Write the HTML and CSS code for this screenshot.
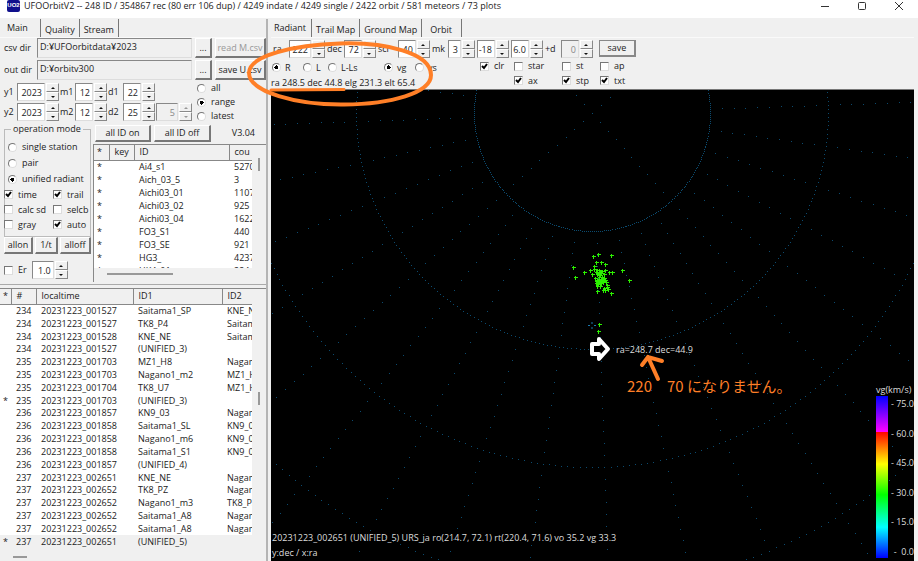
FILE: index.html
```html
<!DOCTYPE html>
<html lang="en">
<head>
    <meta charset="UTF-8">
    <title>UFOOrbitV2</title>
    <link rel="stylesheet" href="styles.css">
</head>
<body>
<header class="titlebar">
    <span class="logo">UO2</span>
    <h1>UFOOrbitV2 -- 248 ID / 354867 rec (80 err 106 dup) / 4249 indate / 4249 single / 2422 orbit / 581 meteors / 73 plots</h1>
    <div class="win-buttons">
        <button aria-label="Minimize"><svg width="10" height="10"><path d="M1 5.500h8"/></svg></button>
        <button aria-label="Maximize"><svg width="10" height="10"><rect x="1.500" y="1.500" width="7" height="7" rx="1"/></svg></button>
        <button aria-label="Close"><svg width="10" height="10"><path d="M1 1l8 8M9 1l-8 8"/></svg></button>
    </div>
</header>
<div class="window">
    <div class="left">
        <nav class="tabs">
            <button class="tab active">Main</button>
            <button class="tab">Quality</button>
            <button class="tab">Stream</button>
        </nav>
        <section class="main-panel">
            <div class="dirs">
                <label for="csvdir">csv dir</label>
                <input class="dir" id="csvdir" type="text" value="D:¥UFOorbitdata¥2023">
                <button class="btn">...</button>
                <button class="btn" disabled>read M.csv</button>
                <label for="outdir">out dir</label>
                <input class="dir" id="outdir" type="text" value="D:¥orbitv300">
                <button class="btn">...</button>
                <button class="btn">save U.csv</button>
            </div>
            <div class="dates">
                <div class="date-rows">
                    <label for="y1">y1</label>
                    <span class="spin w4"><input id="y1" value="2023"><button aria-label="up"></button><button aria-label="down"></button></span>
                    <label for="m1">m1</label>
                    <span class="spin w2"><input id="m1" value="12"><button aria-label="up"></button><button aria-label="down"></button></span>
                    <label for="d1">d1</label>
                    <span class="spin w2"><input id="d1" value="22"><button aria-label="up"></button><button aria-label="down"></button></span>
                    <span></span>
                    <label for="y2">y2</label>
                    <span class="spin w4"><input id="y2" value="2023"><button aria-label="up"></button><button aria-label="down"></button></span>
                    <label for="m2">m2</label>
                    <span class="spin w2"><input id="m2" value="12"><button aria-label="up"></button><button aria-label="down"></button></span>
                    <label for="d2">d2</label>
                    <span class="spin w2"><input id="d2" value="25"><button aria-label="up"></button><button aria-label="down"></button></span>
                    <span class="spin w3"><input aria-label="days" value="5" disabled><button aria-label="up" disabled></button><button aria-label="down" disabled></button></span>
                </div>
                <div class="range">
                    <label><input type="radio" name="range">all</label>
                    <label><input type="radio" name="range" checked>range</label>
                    <label><input type="radio" name="range">latest</label>
                </div>
            </div>
            <div class="lower">
                <div class="modes">
                    <fieldset>
                        <legend>operation mode</legend>
                        <label><input type="radio" name="mode">single station</label>
                        <label><input type="radio" name="mode">pair</label>
                        <label><input type="radio" name="mode" checked>unified radiant</label>
                        <div class="checks">
                            <label><input type="checkbox" checked>time</label>
                            <label><input type="checkbox" checked>trail</label>
                            <label><input type="checkbox">calc sd</label>
                            <label><input type="checkbox">selcb</label>
                            <label><input type="checkbox">gray</label>
                            <label><input type="checkbox" checked>auto</label>
                        </div>
                    </fieldset>
                    <div class="mode-buttons">
                        <button class="btn">allon</button>
                        <button class="btn">1/t</button>
                        <button class="btn">alloff</button>
                    </div>
                    <div class="er">
                        <label><input type="checkbox">Er</label>
                        <span class="spin w3"><input aria-label="Er value" value="1.0"><button aria-label="up"></button><button aria-label="down"></button></span>
                    </div>
                </div>
                <div class="ids">
                    <div class="id-buttons">
                        <button class="btn">all ID on</button>
                        <button class="btn">all ID off</button>
                        <span>V3.04</span>
                    </div>
                    <div class="list id-list">
                        <div class="clip">
                        <table>
                            <colgroup><col class="c15"><col class="c25"><col class="c95"><col></colgroup>
                            <thead><tr><th>*</th><th>key</th><th>ID</th><th>cou</th></tr></thead>
                            <tbody>
                                <tr><td>*</td><td></td><td>Ai4_s1</td><td>5270</td></tr>
                                <tr><td>*</td><td></td><td>Aich_03_5</td><td>3</td></tr>
                                <tr><td>*</td><td></td><td>Aichi03_01</td><td>1107</td></tr>
                                <tr><td>*</td><td></td><td>Aichi03_02</td><td>925</td></tr>
                                <tr><td>*</td><td></td><td>Aichi03_04</td><td>1622</td></tr>
                                <tr><td>*</td><td></td><td>FO3_S1</td><td>440</td></tr>
                                <tr><td>*</td><td></td><td>FO3_SE</td><td>921</td></tr>
                                <tr><td>*</td><td></td><td>HG3_</td><td>4237</td></tr>
                                <tr><td>*</td><td></td><td>HK4_01</td><td>224</td></tr>
                            </tbody>
                        </table>
                        </div>
                        <i class="vthumb"></i>
                        <i class="hthumb"></i>
                    </div>
                </div>
            </div>
        </section>
        <div class="list orbit-list">
            <div class="clip">
            <table>
                <colgroup><col class="c11"><col class="c25"><col class="c97"><col class="c89"><col></colgroup>
                <thead><tr><th>*</th><th>#</th><th>localtime</th><th>ID1</th><th>ID2</th></tr></thead>
                <tbody>
                    <tr><td></td><td>234</td><td>20231223_001527</td><td>Saitama1_SP</td><td>KNE_NE</td></tr>
                    <tr><td></td><td>234</td><td>20231223_001527</td><td>TK8_P4</td><td>Saitama1</td></tr>
                    <tr><td></td><td>234</td><td>20231223_001528</td><td>KNE_NE</td><td>Saitama1</td></tr>
                    <tr><td></td><td>234</td><td>20231223_001527</td><td>(UNIFIED_3)</td><td></td></tr>
                    <tr><td></td><td>235</td><td>20231223_001703</td><td>MZ1_H8</td><td>Nagano1</td></tr>
                    <tr><td></td><td>235</td><td>20231223_001703</td><td>Nagano1_m2</td><td>MZ1_H8</td></tr>
                    <tr><td></td><td>235</td><td>20231223_001704</td><td>TK8_U7</td><td>MZ1_H8</td></tr>
                    <tr><td>*</td><td>235</td><td>20231223_001703</td><td>(UNIFIED_3)</td><td></td></tr>
                    <tr><td></td><td>236</td><td>20231223_001857</td><td>KN9_03</td><td>Nagano1</td></tr>
                    <tr><td></td><td>236</td><td>20231223_001858</td><td>Saitama1_SL</td><td>KN9_03</td></tr>
                    <tr><td></td><td>236</td><td>20231223_001858</td><td>Nagano1_m6</td><td>KN9_03</td></tr>
                    <tr><td></td><td>236</td><td>20231223_001858</td><td>Saitama1_S1</td><td>KN9_03</td></tr>
                    <tr><td></td><td>236</td><td>20231223_001857</td><td>(UNIFIED_4)</td><td></td></tr>
                    <tr><td></td><td>237</td><td>20231223_002651</td><td>KNE_NE</td><td>Nagano1</td></tr>
                    <tr><td></td><td>237</td><td>20231223_002652</td><td>TK8_PZ</td><td>Nagano1</td></tr>
                    <tr><td></td><td>237</td><td>20231223_002652</td><td>Nagano1_m3</td><td>TK8_PZ</td></tr>
                    <tr><td></td><td>237</td><td>20231223_002652</td><td>Saitama1_A8</td><td>Nagano1</td></tr>
                    <tr><td></td><td>237</td><td>20231223_002652</td><td>Saitama1_A8</td><td>Nagano1</td></tr>
                    <tr class="selected"><td>*</td><td>237</td><td>20231223_002651</td><td>(UNIFIED_5)</td><td></td></tr>
                </tbody>
            </table>
            </div>
            <i class="vthumb"></i>
            <i class="hthumb"></i>
        </div>
    </div>
    <div class="right">
        <nav class="tabs">
            <button class="tab active">Radiant</button>
            <button class="tab">Trail Map</button>
            <button class="tab">Ground Map</button>
            <button class="tab orbit-tab">Orbit</button>
        </nav>
        <section class="tools">
            <div class="spins">
                <label for="ra">ra</label>
                <span class="spin w3"><input id="ra" value="222"><button aria-label="up"></button><button aria-label="down"></button></span>
                <label for="dec">dec</label>
                <span class="spin w2"><input id="dec" value="72"><button aria-label="up"></button><button aria-label="down"></button></span>
                <label class="scr" for="scr">scr</label>
                <span class="spin w2"><input id="scr" value="40"><button aria-label="up"></button><button aria-label="down"></button></span>
                <label for="mk">mk</label>
                <span class="spin w1"><input id="mk" value="3"><button aria-label="up"></button><button aria-label="down"></button></span>
                <span class="spin w2"><input aria-label="min" value="-18"><button aria-label="up"></button><button aria-label="down"></button></span>
                <span class="spin w2"><input aria-label="max" value="6.0"><button aria-label="up"></button><button aria-label="down"></button></span>
                <label for="pd">+d</label>
                <span class="spin w2"><input id="pd" value="0" disabled><button aria-label="up"></button><button aria-label="down"></button></span>
                <button class="btn save">save</button>
            </div>
            <div class="options">
                <div class="coords">
                    <div class="radios">
                        <label><input type="radio" name="coord" checked>R</label>
                        <label><input type="radio" name="coord">L</label>
                        <label><input type="radio" name="coord">L-Ls</label>
                        <label><input type="radio" name="vel" checked>vg</label>
                        <label><input type="radio" name="vel">vs</label>
                    </div>
                    <p>ra 248.5 dec 44.8 elg 231.3 elt 65.4</p>
                </div>
                <div class="plot-checks">
                    <label><input type="checkbox" checked>clr</label>
                    <label><input type="checkbox">star</label>
                    <label><input type="checkbox">st</label>
                    <label><input type="checkbox">ap</label>
                    <span></span>
                    <label><input type="checkbox" checked>ax</label>
                    <label><input type="checkbox" checked>stp</label>
                    <label><input type="checkbox" checked>txt</label>
                </div>
            </div>
        </section>
        <section class="plot">
            <svg class="sky" viewBox="271 90 643 471" preserveAspectRatio="xMinYMin slice">
                <path id="grid" fill="#0b4a6e"/>
                <path id="meteors" stroke="#2cf000" fill="none"/>
                <path d="M592 322v2M592 327v2M588 325.500h2M594 325.500h2" stroke="#1a78b0"/>
                <path d="M592 344h7v-5l9 10-9 10v-5h-7z" fill="#000" stroke="#fff" stroke-width="4" stroke-linejoin="round"/>
                <text class="pos" x="616" y="353">ra=248.7 dec=44.9</text>
            </svg>
            <div class="legend">
                <span>vg(km/s)</span>
                <div class="scale">
                    <i class="bar"></i>
                    <ul>
                        <li>- 75.0</li>
                        <li>- 60.0</li>
                        <li>- 45.0</li>
                        <li>- 30.0</li>
                        <li>- 15.0</li>
                        <li>-&nbsp; 0.0</li>
                    </ul>
                </div>
            </div>
            <div class="info">
                <p>20231223_002651 (UNIFIED_5) URS_ja ro(214.7, 72.1) rt(220.4, 71.6) vo 35.2 vg 33.3</p>
                <p>y:dec / x:ra</p>
            </div>
        </section>
    </div>
</div>
<svg class="notes" width="918" height="561">
    <g fill="none" stroke="#ff7f27" stroke-width="4" stroke-linecap="round">
        <path d="M340 43.500C385 42 431 53 431 75C431 93 391 104 344 104.500C297 105 249 92 249 73C249 55 295 45 340 43.500z"/>
        <path d="M271 90L344 89.500" stroke-width="3"/>
        <path d="M658 379L648 357M642 365L648 357L662 361"/>
    </g>
    <text class="memo" x="627" y="392">220　70 になりません。</text>
</svg>
<script>
    // polar grid: declination circles every 118px, right ascension lines every 10 degrees
    const cx = 592, cy = 113, step = 118;
    let grid = "";
    function dot(r, deg) {
        const a = deg * Math.PI / 180;
        const x = Math.round(cx + r * Math.sin(a));
        const y = Math.round(cy + r * Math.cos(a));
        if (x < 271 || x > 913 || y < 90 || y > 560) return;
        grid += "M" + x + " " + y + "h1v1h-1z";
    }
    for (let k = 1; k <= 5; k++) {
        for (let deg = 0; deg < 360; deg++) dot(k * step, deg);
    }
    for (let deg = 2; deg < 362; deg += 10) {
        // only four lines run inside the first circle
        const start = (deg - 42) % 90 === 0 ? 0 : 11;
        for (let i = start; i < 50; i++) dot(i * step / 10, deg);
    }
    document.getElementById("grid").setAttribute("d", grid);

    const points = [
        [593,256],[598,254],[611,255],[596,262],[601,262],[605,264],[573,267],[575,277],[584,272],
        [590,270],[592,274],[594,266],[594,269],[609,272],[612,272],[622,270],[629,280],[611,293],
        [597,291],[603,290],[607,287],[608,289],[599,324],[598,331],[597,270],[599,270],[600,271],
        [599,272],[598,273],[601,273],[597,274],[600,275],[596,272],[602,271],[605,270],[604,274],
        [595,278],[597,280],[598,281],[600,280],[601,281],[602,280],[599,279],[603,281],[605,280],
        [596,283],[598,284],[601,283],[603,282],[597,286],[599,277],[602,277],[604,278],[606,282],
        [604,288],[605,290],[607,285],[600,286],[596,281],[599,282],[601,279]
    ];
    let d = "";
    for (const [x, y] of points) {
        d += "M" + (x - 1) + " " + (y + 0.5) + "h4M" + (x + 0.5) + " " + (y - 1) + "v4";
    }
    document.getElementById("meteors").setAttribute("d", d);
</script>
</body>
</html>
```

FILE: styles.css
```css
*{
    box-sizing: border-box;
    margin: 0;
    padding: 0;
}

body{
    height: 100vh;
    display: flex;
    flex-direction: column;
    overflow: hidden;
    background-color: #f0f0f0;
    color: #222;
    font: 9px/12px "Open Sans", "Noto Sans", sans-serif;
}

button, input{
    font: inherit;
    color: inherit;
}

label{
    display: flex;
    align-items: center;
    white-space: nowrap;
}

/* title bar */
.titlebar{
    display: flex;
    align-items: center;
    height: 18px;
    padding: 0 14px 6px 7px;
    background-color: white;
}
.logo{
    width: 13px;
    height: 12px;
    margin-right: 4px;
    background-color: #10108c;
    color: white;
    font: bold 6px/11px "Liberation Sans", sans-serif;
    text-align: center;
    border-radius: 2px;
}
h1{
    flex: 1;
    font-size: 9px;
    font-weight: normal;
    white-space: nowrap;
}
.win-buttons{
    display: flex;
    gap: 27px;
}
.win-buttons button{
    width: 10px;
    height: 10px;
    border: none;
    background: none;
}
.win-buttons svg{
    display: block;
    fill: none;
    stroke: #333;
}

.window{
    flex: 1;
    min-height: 0;
    display: grid;
    grid-template-columns: 268px 1fr;
    gap: 3px;
    padding: 1px 4px 0 0;
}
.left, .right{
    display: flex;
    flex-direction: column;
    min-height: 0;
    min-width: 0;
}
.left{
    border-right: 2px solid #b4b4b4;
}

.tabs{
    display: flex;
    height: 19px;
    border-bottom: 1px solid #fafafa;
}
.tab{
    padding: 3px 4px 0 4px;
    border: none;
    border-right: 1px solid #777;
    background: none;
}
.active{
    padding-top: 0;
}
.left .active{
    padding: 0 12px 0 7px;
}
.right .active{
    padding: 0 5px 0 3px;
}
.orbit-tab{
    padding-left: 8px;
    padding-right: 9px;
}

.btn{
    height: 17px;
    border: 1px solid;
    border-color: white #777 #777 white;
    border-right-width: 2px;
    border-bottom-width: 2px;
    background-color: #f0f0f0;
    white-space: nowrap;
}
.btn:disabled{
    color: #999;
}

/* number boxes with up and down buttons */
.spin{
    display: grid;
    grid-template-columns: 1fr 13px;
    grid-template-rows: 9px 9px;
    column-gap: 1px;
}
.spin input{
    grid-row: 1 / 3;
    width: 100%;
    height: 18px;
    padding-right: 2px;
    border: 1px solid #888;
    border-right-color: #ddd;
    border-bottom-color: #ddd;
    background-color: white;
    text-align: right;
}
.spin input:disabled{
    background-color: #f0f0f0;
    color: #888;
}
.spin button{
    display: flex;
    justify-content: center;
    align-items: center;
    border: 1px solid;
    border-color: white #888 #888 white;
    background-color: #f0f0f0;
}
.spin button::before{
    content: "";
    border: 2px solid transparent;
    border-top: none;
    border-bottom: 2px solid #111;
}
.spin button:last-child::before{
    border-bottom: none;
    border-top: 2px solid #111;
}
.spin button:disabled::before{
    opacity: 0.4;
}
.w1{ width: 27px; }
.w2{ width: 32px; }
.w3{ width: 36px; }
.w4{ width: 42px; }

input[type=radio], input[type=checkbox]{
    appearance: none;
    flex: none;
    width: 9px;
    height: 9px;
    margin-right: 5px;
    border: 1px solid;
    border-color: #777 #ddd #ddd #777;
    background-color: white;
}
input[type=radio]{
    border-radius: 50%;
}
input[type=radio]:checked{
    background-image: radial-gradient(circle, #000 0 2px, transparent 2px);
}
input[type=checkbox]:checked{
    background-image: url("data:image/svg+xml,%3Csvg xmlns='http://www.w3.org/2000/svg' viewBox='0 0 7 7'%3E%3Cpath d='M1 3l2 2 3-4' fill='none' stroke='%23000' stroke-width='2'/%3E%3C/svg%3E");
}

/* left side */
.main-panel{
    height: 247px;
    border-bottom: 1px solid #aaa;
}
.dirs{
    display: grid;
    grid-template-columns: 30px 1fr 17px 51px;
    column-gap: 3px;
    row-gap: 2px;
    padding-left: 4px;
}
.dirs .btn{
    height: 20px;
}
.dir{
    min-width: 0;
    height: 20px;
    padding: 0 2px 4px 2px;
    border: 1px solid #888;
    border-right-color: #ddd;
    border-bottom-color: #ddd;
    background-color: #f0f0f0;
}
.dates{
    display: flex;
    justify-content: space-between;
    padding: 1px 0 0 4px;
}
.date-rows{
    display: grid;
    align-content: start;
    grid-template-columns: 12px 42px 14px 32px 14px 32px 36px;
    column-gap: 1px;
    row-gap: 2px;
    padding-top: 2px;
}
.range{
    flex: 1;
    padding-left: 5px;
}
.range label{
    height: 14px;
}
.lower{
    display: flex;
    gap: 2px;
    padding-left: 4px;
}
.modes{
    flex: none;
    width: 87px;
}
fieldset{
    height: 114px;
    min-width: 0;
    padding: 4px 0 0 3px;
    border: 1px solid #bbb;
}
legend{
    margin-left: 3px;
    padding: 0 2px;
}
fieldset > label{
    height: 16px;
}
.checks{
    display: grid;
    grid-template-columns: 49px 1fr;
    margin-left: -4px;
}
.checks label{
    height: 15px;
}
.mode-buttons{
    display: grid;
    grid-template-columns: 29px 23px 1fr;
    gap: 2px;
}
.er{
    display: flex;
    gap: 5px;
    padding-top: 7px;
}
.ids{
    flex: 1;
    min-width: 0;
    padding-top: 2px;
}
.id-buttons{
    display: grid;
    grid-template-columns: 56px 57px 1fr;
    gap: 3px;
    padding: 0 11px 2px 2px;
}
.id-buttons span{
    justify-self: end;
    padding-top: 2px;
}

/* lists */
.list{
    position: relative;
    border-top: 1px solid #888;
    border-left: 1px solid #888;
    padding-right: 14px;
}
.clip{
    overflow: hidden;
    background-color: white;
}
.id-list .clip{
    height: 123px;
}
.id-list{
    height: 138px;
}
.orbit-list{
    flex: 1;
    min-height: 0;
    margin-top: 3px;
    padding-bottom: 13px;
    border-left: none;
}
.orbit-list .clip, .orbit-list table{
    height: 100%;
}
table{
    width: 100%;
    table-layout: fixed;
    border-collapse: collapse;
}
th, td{
    overflow: hidden;
    padding: 0 0 0 5px;
    line-height: 12px;
    text-align: left;
    font-weight: normal;
    white-space: nowrap;
}
th:first-child, td:first-child{
    padding-left: 3px;
}
th{
    height: 15px;
    border-right: 1px solid #888;
    border-bottom: 1px solid #888;
    background-color: #f0f0f0;
}
th:last-child{
    border-right: none;
}
.id-list td{
    height: 13px;
}
.selected{
    background-color: #f0f0f0;
}
.c11{ width: 11px; }
.c15{ width: 15px; }
.c25{ width: 25px; }
.c89{ width: 89px; }
.c95{ width: 95px; }
.c97{ width: 97px; }

.vthumb{
    position: absolute;
    right: 6px;
    top: 13px;
    width: 2px;
    height: 13px;
    background-color: #999;
}
.hthumb{
    position: absolute;
    left: 13px;
    bottom: 7px;
    width: 66px;
    height: 2px;
    background-color: #999;
}
.orbit-list .vthumb{
    top: 38%;
}
.orbit-list .hthumb{
    bottom: 3px;
    width: 14px;
}

/* right side */
.tools{
    height: 52px;
    border-bottom: 1px solid #777;
}
.spins{
    display: flex;
    gap: 2px;
    padding: 2px 0 0 2px;
}
.spins label{
    min-width: 14px;
}
.spins .scr{
    min-width: 18px;
}
.save{
    width: 37px;
    margin-left: 4px;
    border-color: #888;
}
.options{
    display: flex;
    padding-top: 1px;
}
.coords{
    width: 209px;
}
.radios{
    display: grid;
    grid-template-columns: 31px 25px 56px 31px 1fr;
    padding-left: 1px;
    height: 17px;
}
.radios input{
    margin-right: 4px;
}
.coords p{
    padding-top: 1px;
}
.plot-checks{
    display: grid;
    grid-template-columns: 34px 48px 38px 40px;
    grid-template-rows: 14px 15px;
}
.plot{
    position: relative;
    flex: 1;
    min-height: 0;
    background-color: black;
    color: #ddd;
}
.sky{
    display: block;
    width: 100%;
    height: 100%;
}
.pos{
    fill: #ddd;
}
.info{
    position: absolute;
    left: 1px;
    bottom: 2px;
}
.info p + p{
    margin-top: 3px;
}
.legend{
    position: absolute;
    right: 0;
    bottom: 3px;
    width: 38px;
    white-space: nowrap;
}
.scale{
    display: flex;
    justify-content: space-between;
    height: 162px;
}
.bar{
    width: 12px;
    background: linear-gradient(#00f, #f0f 22%, #f00 22%, #ff0 42%, #0f0 61%, #0ff 81%, #00f);
}
.scale ul{
    display: flex;
    flex-direction: column;
    justify-content: space-between;
    padding-top: 2px;
    list-style: none;
    text-align: right;
}

/* pen marks over the window */
.notes{
    position: absolute;
    left: 0;
    top: 0;
    pointer-events: none;
}
.memo{
    fill: #ff7f27;
    font: 15px "Noto Sans CJK JP", sans-serif;
}
```
